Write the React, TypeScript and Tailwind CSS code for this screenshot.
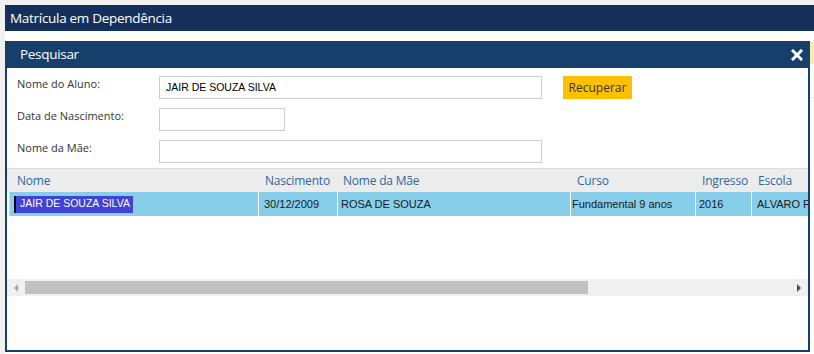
import React from "react";

const cols = [
  { label: "Nome", w: "w-[248px]" },
  { label: "Nascimento", w: "w-[78px]" },
  { label: "Nome da Mãe", w: "w-[234px]" },
  { label: "Curso", w: "w-[125px]" },
  { label: "Ingresso", w: "w-[56px]" },
  { label: "Escola", w: "w-[120px]" },
];

export default function App() {
  return (
    <div className="relative w-[814px] h-[354px] overflow-hidden bg-[#f0f0f0] font-['Open_Sans',sans-serif]">
      <div className="ml-[5px] mt-[5px] h-[26px] bg-[#14305a] flex items-center pl-[5px]">
        <span className="text-white text-[13.5px] tracking-[-0.3px]">Matrícula em Dependência</span>
      </div>
      <div className="ml-[5px] h-[323px] bg-white relative">
        <div className="absolute right-0 top-[11px] w-[6px] h-[22px] bg-[#fde8b0]" />
        <div className="absolute right-0 top-[66px] w-[6px] h-[1px] bg-[#e6e6e6]" />
      </div>

      {/* dialog */}
      <div className="absolute left-[5px] top-[41px] w-[805px] h-[311px] flex flex-col bg-white">
        <div className="h-[27px] bg-[#173f6b] flex items-center justify-between pl-[15px] pr-[7px]">
          <span className="text-white text-[13.5px] tracking-[-0.3px]">Pesquisar</span>
          <svg width="12" height="12" viewBox="0 0 12 12">
            <path d="M2 2 L10 10 M10 2 L2 10" stroke="white" strokeWidth="3" strokeLinecap="square" />
          </svg>
        </div>
        <div className="flex-1 flex flex-col border-x-2 border-b-2 border-[#173f6b] overflow-hidden">
          <div className="flex flex-col gap-[9px] pt-[8px] pl-[10px]">
            <div className="flex items-center h-[23px]">
              <span className="w-[142px] text-[11px] text-[#333] -mt-[6px]">Nome do Aluno:</span>
              <div className="w-[383px] h-[23px] border border-[#cccccc] flex items-center pl-[6px] text-[10.5px] text-black font-['Liberation_Sans',sans-serif]">
                JAIR DE SOUZA SILVA
              </div>
              <div className="ml-[21px] w-[69px] h-[23px] bg-[#ffc000] flex items-center justify-center text-[12px] text-[#333]">
                Recuperar
              </div>
            </div>
            <div className="flex items-center h-[23px]">
              <span className="w-[142px] text-[11px] text-[#333] -mt-[6px]">Data de Nascimento:</span>
              <div className="w-[126px] h-[23px] border border-[#cccccc]" />
            </div>
            <div className="flex items-center h-[23px]">
              <span className="w-[142px] text-[11px] text-[#333] -mt-[6px]">Nome da Mãe:</span>
              <div className="w-[383px] h-[23px] border border-[#cccccc]" />
            </div>
          </div>

          <div className="mt-[5px] border-t border-[#dddddd] h-[24px] bg-[#ececec] flex items-center pl-[10px] text-[12px] text-[#31689c] tracking-[-0.2px] whitespace-nowrap">
            {cols.map((c) => (
              <span key={c.label} className={`${c.w} shrink-0`}>{c.label}</span>
            ))}
          </div>
          <div className="h-[24px] bg-[#87ceeb] flex items-stretch text-[11px] text-[#1a1a1a] font-['Liberation_Sans',sans-serif] whitespace-nowrap border-l border-[#b9e3f5] ml-[2px]">
            <div className="w-[249px] shrink-0 flex items-center pl-[4px] border-r border-white">
              <span className="h-[17px] w-[119px] bg-[#4242d4] border-l-2 border-black text-white flex items-center pl-[4px] text-[10.5px]">
                JAIR DE SOUZA SILVA
              </span>
            </div>
            <div className="w-[79px] shrink-0 flex items-center pl-[5px] border-r border-white">30/12/2009</div>
            <div className="w-[233px] shrink-0 flex items-center pl-[3px] border-r border-white">ROSA DE SOUZA</div>
            <div className="w-[125px] shrink-0 flex items-center pl-[1px] border-r border-white">Fundamental 9 anos</div>
            <div className="w-[56px] shrink-0 flex items-center pl-[3px] border-r border-white">2016</div>
            <div className="w-[120px] shrink-0 flex items-center pl-[5px]">ALVARO PEREIRA</div>
          </div>

          <div className="h-[63px]" />

          <div className="h-[17px] bg-[#f0f0f0] flex items-center">
            <div className="w-[18px] flex items-center justify-center">
              <svg width="4" height="8" viewBox="0 0 4 8"><path d="M4 0 L0 4 L4 8 Z" fill="#a3a3a3" /></svg>
            </div>
            <div className="w-[563px] h-[13px] bg-[#c1c1c1]" />
            <div className="flex-1" />
            <div className="w-[18px] flex items-center justify-center">
              <svg width="4" height="8" viewBox="0 0 4 8"><path d="M0 0 L4 4 L0 8 Z" fill="#505050" /></svg>
            </div>
          </div>
          <div className="flex-1" />
        </div>
      </div>
    </div>
  );
}
